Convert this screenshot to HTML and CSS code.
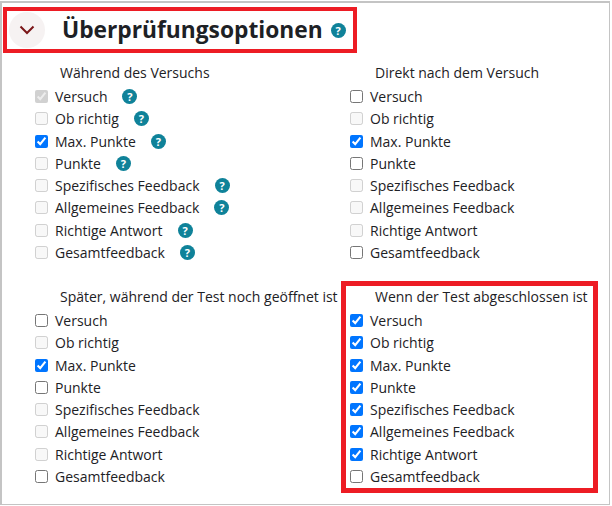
FILE: index.html
```html
<!DOCTYPE html>
<html lang="de">
<head>
    <meta charset="utf-8">
    <title>Überprüfungsoptionen</title>
    <link rel="stylesheet" href="styles.css">
</head>
<body>
    <div class="page">
        <div class="section-head">
            <span class="toggle">
                <svg width="16" height="10" viewBox="0 0 16 10"><path d="M1.5 1.5 L8 8 L14.5 1.5" fill="none" stroke="#7b1518" stroke-width="2"/></svg>
            </span>
            <h2 class="section-title">Überprüfungsoptionen</h2>
            <span class="help help-large">?</span>
        </div>

        <div class="groups">
            <div class="group">
                <div class="group-title">Während des Versuchs</div>
                <label class="row"><input type="checkbox" checked disabled><span class="text">Versuch</span><span class="help">?</span></label>
                <label class="row"><input type="checkbox" disabled><span class="text">Ob richtig</span><span class="help">?</span></label>
                <label class="row"><input type="checkbox" checked><span class="text">Max. Punkte</span><span class="help">?</span></label>
                <label class="row"><input type="checkbox" disabled><span class="text">Punkte</span><span class="help">?</span></label>
                <label class="row"><input type="checkbox" disabled><span class="text">Spezifisches Feedback</span><span class="help">?</span></label>
                <label class="row"><input type="checkbox" disabled><span class="text">Allgemeines Feedback</span><span class="help">?</span></label>
                <label class="row"><input type="checkbox" disabled><span class="text">Richtige Antwort</span><span class="help">?</span></label>
                <label class="row"><input type="checkbox" disabled><span class="text">Gesamtfeedback</span><span class="help">?</span></label>
            </div>

            <div class="group">
                <div class="group-title">Direkt nach dem Versuch</div>
                <label class="row"><input type="checkbox"><span class="text">Versuch</span></label>
                <label class="row"><input type="checkbox" disabled><span class="text">Ob richtig</span></label>
                <label class="row"><input type="checkbox" checked><span class="text">Max. Punkte</span></label>
                <label class="row"><input type="checkbox"><span class="text">Punkte</span></label>
                <label class="row"><input type="checkbox" disabled><span class="text">Spezifisches Feedback</span></label>
                <label class="row"><input type="checkbox" disabled><span class="text">Allgemeines Feedback</span></label>
                <label class="row"><input type="checkbox" disabled><span class="text">Richtige Antwort</span></label>
                <label class="row"><input type="checkbox"><span class="text">Gesamtfeedback</span></label>
            </div>

            <div class="group">
                <div class="group-title">Später, während der Test noch geöffnet ist</div>
                <label class="row"><input type="checkbox"><span class="text">Versuch</span></label>
                <label class="row"><input type="checkbox" disabled><span class="text">Ob richtig</span></label>
                <label class="row"><input type="checkbox" checked><span class="text">Max. Punkte</span></label>
                <label class="row"><input type="checkbox"><span class="text">Punkte</span></label>
                <label class="row"><input type="checkbox" disabled><span class="text">Spezifisches Feedback</span></label>
                <label class="row"><input type="checkbox" disabled><span class="text">Allgemeines Feedback</span></label>
                <label class="row"><input type="checkbox" disabled><span class="text">Richtige Antwort</span></label>
                <label class="row"><input type="checkbox"><span class="text">Gesamtfeedback</span></label>
            </div>

            <div class="group group-marked">
                <div class="group-title">Wenn der Test abgeschlossen ist</div>
                <label class="row"><input type="checkbox" checked><span class="text">Versuch</span></label>
                <label class="row"><input type="checkbox" checked><span class="text">Ob richtig</span></label>
                <label class="row"><input type="checkbox" checked><span class="text">Max. Punkte</span></label>
                <label class="row"><input type="checkbox" checked><span class="text">Punkte</span></label>
                <label class="row"><input type="checkbox" checked><span class="text">Spezifisches Feedback</span></label>
                <label class="row"><input type="checkbox" checked><span class="text">Allgemeines Feedback</span></label>
                <label class="row"><input type="checkbox" checked><span class="text">Richtige Antwort</span></label>
                <label class="row"><input type="checkbox"><span class="text">Gesamtfeedback</span></label>
            </div>
        </div>
    </div>
</body>
</html>
```

FILE: styles.css
```css
html, body {
    margin: 0;
    background: #fff;
}
body {
    padding: 1px 2px 1px 0;
    font-family: "Open Sans", "Noto Sans", sans-serif;
    font-size: 14px;
    color: #1d2125;
}
.page {
    box-sizing: border-box;
    width: 610px;
    height: 504px;
    border: 2px solid #c4c4c4;
    border-right-width: 1px;
    border-bottom-width: 1px;
    overflow: hidden;
}
.section-head {
    box-sizing: border-box;
    display: flex;
    align-items: center;
    width: 354px;
    height: 46px;
    margin: 4px 0 0 1px;
    padding-left: 2px;
    border: 4px solid #ed1c24;
}
.toggle {
    display: flex;
    align-items: center;
    justify-content: center;
    width: 36px;
    height: 36px;
    border-radius: 50%;
    background: #f6f2f2;
}
.section-title {
    margin: 0 0 0 17px;
    font-size: 22.75px;
    font-weight: 700;
    line-height: 36px;
}
.help {
    display: inline-block;
    width: 15px;
    height: 15px;
    margin-left: 15px;
    border-radius: 50%;
    background: #0f8299;
    color: #fff;
    font-size: 11px;
    font-weight: 700;
    line-height: 15px;
    text-align: center;
}
.help-large {
    margin-left: 8px;
}
.groups {
    display: grid;
    grid-template-columns: 316px 257px;
    grid-auto-rows: 212px;
    row-gap: 12px;
    margin: 4px 0 0 23px;
}
.group {
    box-sizing: border-box;
    padding: 1px 0 0 5px;
    border: 5px solid transparent;
}
.group:nth-child(even) {
    padding-left: 4px;
}
.group-marked {
    border-color: #ed1c24;
}
.group-title {
    height: 20px;
    margin-bottom: 2.5px;
    padding-left: 25px;
    line-height: 20px;
    white-space: nowrap;
}
.row {
    display: flex;
    align-items: center;
    height: 22.25px;
}
.row input {
    flex: none;
    width: 13px;
    height: 13px;
    margin: 0 7px 0 0;
}
.text {
    white-space: nowrap;
}
```
